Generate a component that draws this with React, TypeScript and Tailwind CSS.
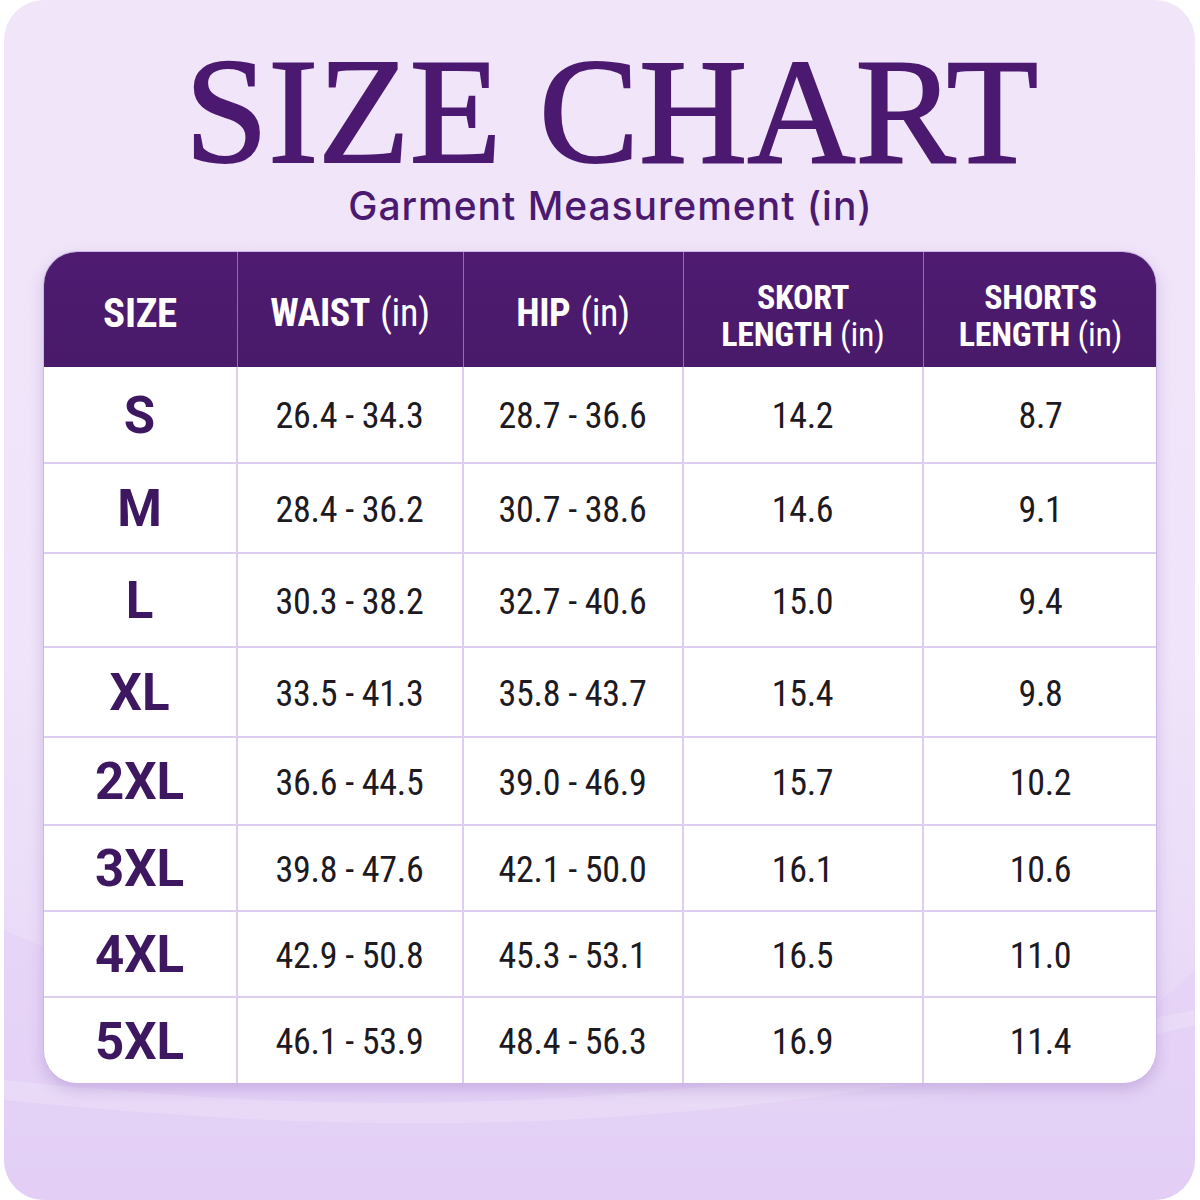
import React from "react";

const rows = [
  { size: "S", waist: "26.4 - 34.3", hip: "28.7 - 36.6", skort: "14.2", shorts: "8.7", h: "h-[95px]" },
  { size: "M", waist: "28.4 - 36.2", hip: "30.7 - 38.6", skort: "14.6", shorts: "9.1", h: "h-[90px]" },
  { size: "L", waist: "30.3 - 38.2", hip: "32.7 - 40.6", skort: "15.0", shorts: "9.4", h: "h-[94px]" },
  { size: "XL", waist: "33.5 - 41.3", hip: "35.8 - 43.7", skort: "15.4", shorts: "9.8", h: "h-[90px]" },
  { size: "2XL", waist: "36.6 - 44.5", hip: "39.0 - 46.9", skort: "15.7", shorts: "10.2", h: "h-[88px]" },
  { size: "3XL", waist: "39.8 - 47.6", hip: "42.1 - 50.0", skort: "16.1", shorts: "10.6", h: "h-[86px]" },
  { size: "4XL", waist: "42.9 - 50.8", hip: "45.3 - 53.1", skort: "16.5", shorts: "11.0", h: "h-[86px]" },
  { size: "5XL", waist: "46.1 - 53.9", hip: "48.4 - 56.3", skort: "16.9", shorts: "11.4", h: "h-[87px]" },
];

const narrow = "font-['Roboto_Condensed',Roboto,sans-serif]";
const cols = "grid grid-cols-[194px_226px_220px_240px_234px]";
const cell = `flex items-center justify-center pt-[3px] ${narrow} text-[36px] tracking-[-0.3px] text-[#1d1a22]`;

export default function App() {
  return (
    <div className="w-[1200px] h-[1200px] bg-white pl-[4px] pr-[5px]">
      <div className="relative h-full rounded-[40px] bg-[linear-gradient(180deg,#f1e5f9_0%,#efe4f9_55%,#eadcf8_78%,#e2cef4_100%)] flex flex-col items-center overflow-hidden">
        {/* soft swoosh in the background */}
        <svg className="absolute left-0 bottom-0" width="1191" height="420" viewBox="0 0 1191 420">
          <path d="M0 150 C 250 260, 450 300, 700 330 C 900 350, 1080 300, 1191 190 L1191 420 L0 420 Z" fill="#e4d0f5" opacity="0.55" />
          <path d="M0 300 C 300 330, 600 350, 1191 230 L1191 245 C 700 365, 350 355, 0 320 Z" fill="#ffffff" opacity="0.18" />
        </svg>

        {/* Title */}
        <h1 className="relative mt-[56px] ml-[24px] font-['Liberation_Serif',serif] text-[150px] leading-[110px] text-[#4b1a70] [-webkit-text-stroke:2px_#4b1a70]">
          SIZE CHART
        </h1>
        <p className="relative mt-[20px] ml-[22px] font-['Inter',sans-serif] text-[39px] leading-none font-medium tracking-[0.025em] text-[#4b1a70]">
          Garment Measurement (in)
        </p>

        {/* Table */}
        <div className="relative mt-[26px] w-[1114px] rounded-[34px] overflow-hidden border border-[#cdb6ea] bg-white shadow-[0_6px_14px_rgba(120,80,170,0.25)]">
          <div className={`${cols} h-[115px] bg-[linear-gradient(180deg,#4e1b70_0%,#491a6a_100%)] text-white ${narrow} font-bold text-center`}>
            <div className="flex items-center justify-center pt-[8px] border-r border-[#8f72ad] text-[41px] tracking-[-0.3px]">SIZE</div>
            <div className="flex items-center justify-center gap-[10px] pt-[8px] border-r border-[#8f72ad] text-[38px] tracking-[-0.4px]">
              <span>WAIST</span>
              <span className="font-normal">(in)</span>
            </div>
            <div className="flex items-center justify-center gap-[10px] pt-[8px] border-r border-[#8f72ad] text-[38px] tracking-[-0.4px]">
              <span>HIP</span>
              <span className="font-normal">(in)</span>
            </div>
            <div className="flex flex-col items-center justify-center pt-[12px] border-r border-[#8f72ad] text-[34px] leading-[37px] tracking-[-0.3px]">
              <span>SKORT</span>
              <span>
                LENGTH <span className="font-normal">(in)</span>
              </span>
            </div>
            <div className="flex flex-col items-center justify-center pt-[12px] text-[34px] leading-[37px] tracking-[-0.3px]">
              <span>SHORTS</span>
              <span>
                LENGTH <span className="font-normal">(in)</span>
              </span>
            </div>
          </div>

          <div className="flex flex-col">
            {rows.map((r, i) => (
              <div
                key={r.size}
                className={`${cols} ${r.h} ${i > 0 ? "border-t-2 border-[#ddcdf0]" : ""} text-center`}
              >
                <div className="flex items-center justify-center pt-[3px] border-r-2 border-[#ddcdf0] font-['Roboto',sans-serif] font-bold text-[51px] text-[#3e1761]">
                  {r.size}
                </div>
                <div className={`${cell} border-r-2 border-[#ddcdf0]`}>{r.waist}</div>
                <div className={`${cell} border-r-2 border-[#ddcdf0]`}>{r.hip}</div>
                <div className={`${cell} border-r-2 border-[#ddcdf0]`}>{r.skort}</div>
                <div className={cell}>{r.shorts}</div>
              </div>
            ))}
          </div>
        </div>
      </div>
    </div>
  );
}
